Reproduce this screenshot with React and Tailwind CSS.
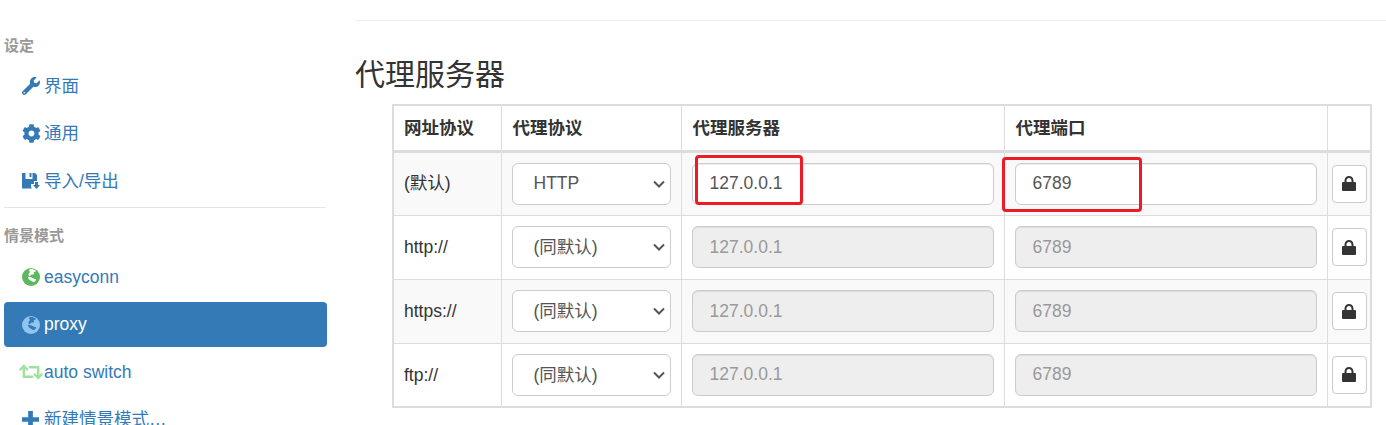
import React from "react";
import { FaWrench, FaCog, FaRetweet } from "react-icons/fa";

const FloppySave = ({ className }) => (
  <svg viewBox="0 0 18 18" className={className} fill="currentColor">
    <path d="M0 1h3.500v6h7V1h2.500l2 2v6h-3v3H9v3l1 1.500H0z" />
    <path d="M7.500 1h2v4h-2z" />
    <path d="M13 10h3v3h2l-3.500 4L11 13h2z" />
  </svg>
);

const Globe = ({ className, land }) => (
  <svg viewBox="0 0 18 18" className={className}>
    <circle cx="9" cy="9" r="9" fill="currentColor" />
    <path
      d="M7 1.500c2-1 5-.5 6.500 1 .5 1-.5 1.500-1.500 1.500-.5 1 .5 2-.5 2.500-1 .3-2-.5-2.500.5-.5 1.500-2 1-2.500 0C6 6 7.500 5 8 4c-.5-1-1.500-1.500-1-2.500zM6 9c1.500-.5 3 .5 4.500 1 1.500.3 2 1.500 3.500 1 .5 1-1 2.500-2 3-1 .3-1.500-.5-2.500-1C8 12.500 6 11 6 9z"
      fill={land}
    />
  </svg>
);

const PlusIcon = ({ className }) => (
  <svg viewBox="0 0 18 18" className={className} fill="currentColor">
    <path d="M6.500 0h5v6.500H18v5h-6.500V18h-5v-6.500H0v-5h6.500z" />
  </svg>
);

const LockIcon = ({ className }) => (
  <svg viewBox="0 0 14 15" className={className} fill="currentColor">
    <path d="M2.500 6V4.500C2.500 2 4.500 0 7 0s4.500 2 4.500 4.500V6H13a1 1 0 0 1 1 1v7a1 1 0 0 1-1 1H1a1 1 0 0 1-1-1V7a1 1 0 0 1 1-1zM4.500 6h5V4.500C9.500 3 8.500 2 7 2S4.500 3 4.500 4.500z" fillRule="evenodd" />
  </svg>
);

const NavItem = ({ icon, children, active }) => (
  <li
    className={`mt-[2.5px] flex h-[45px] items-center rounded pl-[18px] text-[17.5px] ${
      active ? "bg-[#337ab7] text-white" : "text-[#337ab7]"
    }`}
  >
    <span className="flex w-[22px] shrink-0 items-center justify-start">{icon}</span>
    <span>{children}</span>
  </li>
);

const rows = [
  { name: "(默认)", proto: "HTTP", disabled: false },
  { name: "http://", proto: "(同默认)", disabled: true },
  { name: "https://", proto: "(同默认)", disabled: true },
  { name: "ftp://", proto: "(同默认)", disabled: true },
];

function Field({ value, disabled }) {
  return (
    <input
      readOnly
      disabled={disabled}
      value={value}
      className={`h-[42px] w-full rounded-md border border-[#ccc] pr-4 pl-[17px] shadow-[inset_0_1px_1px_rgba(0,0,0,0.075)] ${
        disabled ? "bg-[#eee] text-[#999]" : "bg-white text-[#555]"
      }`}
    />
  );
}

export default function App() {
  return (
    <div className="relative flex h-[425px] w-[1386px] overflow-hidden bg-white font-['Liberation_Sans','Noto_Sans_CJK_SC',sans-serif] text-[#333]">
      <aside className="ml-1 w-[323px] shrink-0 pt-[37px]">
        <h2 className="text-[15px] leading-[18px] font-bold text-[#999]">设定</h2>
        <ul className="mt-[8.5px]">
          <NavItem icon={<FaWrench className="size-[18px]" />}>界面</NavItem>
          <NavItem icon={<FaCog className="size-[19px]" />}>通用</NavItem>
          <NavItem icon={<FloppySave className="size-[18px]" />}>导入/导出</NavItem>
        </ul>
        <div className="mt-[3px] mr-px h-px bg-[#e5e5e5]" />
        <h2 className="mt-[19px] text-[15px] leading-[18px] font-bold text-[#999]">情景模式</h2>
        <ul className="mt-[10px]">
          <NavItem icon={<Globe land="#ffffff" className="size-[18px] text-[#5cb85c]" />}>easyconn</NavItem>
          <NavItem active icon={<Globe land="#337ab7" className="size-[18px] text-[#8fc5ee]" />}>proxy</NavItem>
          <NavItem icon={<FaRetweet className="-ml-[3px] size-[24px] shrink-0 text-[#9ee29e]" />}>auto switch</NavItem>
          <NavItem icon={<PlusIcon className="size-[17px]" />}>新建情景模式…</NavItem>
        </ul>
      </aside>

      <main className="ml-[28px] min-w-0 flex-1 pt-5">
        <div className="h-px bg-[#eee]" />
        <h1 className="mt-[34px] text-[30px] leading-[40px] font-normal">代理服务器</h1>
        <div className="mt-[9px] ml-[37px]">
          <table className="w-[979px] table-fixed border-collapse border-2 border-[#ddd] text-[17.5px]">
            <colgroup>
              <col className="w-[108px]" />
              <col className="w-[180px]" />
              <col className="w-[323px]" />
              <col className="w-[323px]" />
              <col className="w-[44px]" />
            </colgroup>
            <thead>
              <tr className="h-[46px]">
                {["网址协议", "代理协议", "代理服务器", "代理端口", ""].map((h, i) => (
                  <th
                    key={i}
                    className={`border border-b-[3px] border-[#ddd] pr-[10px] text-left font-bold ${
                      i === 0 ? "pl-[10px]" : "pl-[11px]"
                    }`}
                  >
                    {h}
                  </th>
                ))}
              </tr>
            </thead>
            <tbody>
              {rows.map((r, i) => (
                <tr key={r.name} className={`h-[64px] ${i % 2 === 0 ? "bg-[#f9f9f9]" : ""}`}>
                  <td className="border border-[#ddd] px-[10px] text-[#333]">{r.name}</td>
                  <td className="border border-[#ddd] px-[10px]">
                    <div className="relative h-[42px] w-[159px]">
                      <select
                        defaultValue={r.proto}
                        className="h-full w-full appearance-none rounded-md border border-[#ccc] bg-white pl-[21px] text-[#555]"
                      >
                        <option>{r.proto}</option>
                      </select>
                      <svg viewBox="0 0 12 8" className="pointer-events-none absolute top-[17px] right-[6px] h-2 w-3 text-[#555]" fill="none" stroke="currentColor" strokeWidth="2">
                        <path d="M1 1.500l5 5 5-5" />
                      </svg>
                    </div>
                  </td>
                  <td className="border border-[#ddd] px-[10px]">
                    <Field value="127.0.0.1" disabled={r.disabled} />
                  </td>
                  <td className="border border-[#ddd] px-[10px]">
                    <Field value="6789" disabled={r.disabled} />
                  </td>
                  <td className="border border-[#ddd] px-1">
                    <button className="flex h-[38px] w-[35px] items-center justify-center rounded border border-[#ccc] bg-white text-[#333]">
                      <LockIcon className="h-[15px] w-[14px]" />
                    </button>
                  </td>
                </tr>
              ))}
            </tbody>
          </table>
        </div>
      </main>

      <div className="absolute top-[155px] left-[695px] h-[50px] w-[108px] rounded-sm border-[3px] border-[#ed1c24]" />
      <div className="absolute top-[157px] left-[1002px] h-[55px] w-[140px] rounded-sm border-[3px] border-[#ed1c24]" />
    </div>
  );
}
